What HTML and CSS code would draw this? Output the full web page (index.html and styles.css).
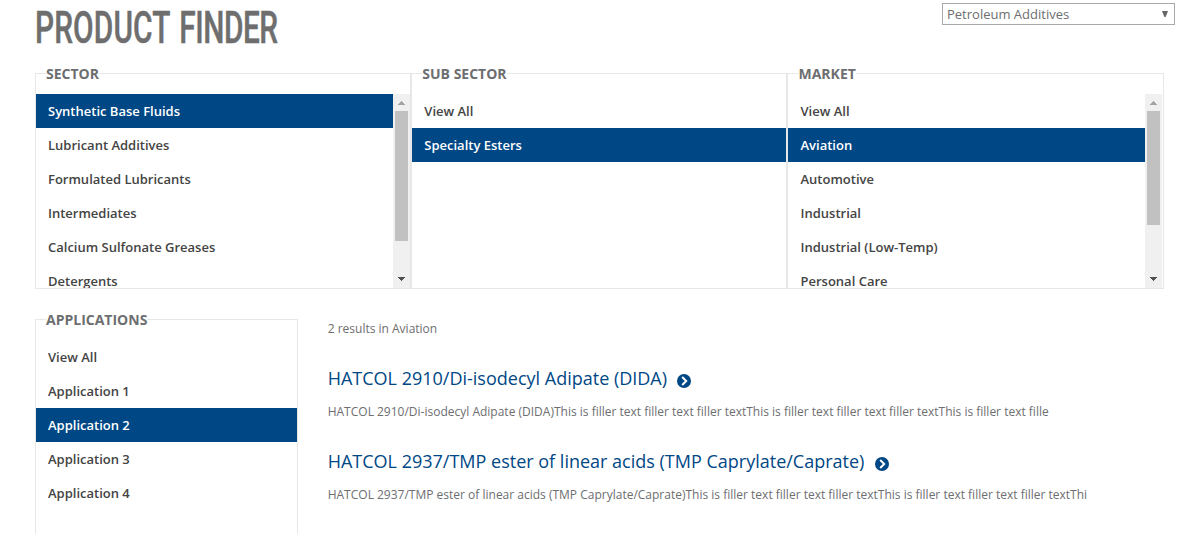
FILE: index.html
```html
<!DOCTYPE html>
<html lang="en">
<head>
<meta charset="utf-8">
<title>Product Finder</title>
<link rel="stylesheet" href="styles.css">
</head>
<body>
<header class="header">
  <h1 class="title"><span class="word-product">PRODUCT</span> <span class="word-finder">FINDER</span></h1>
  <div class="select" role="combobox" aria-label="Category" tabindex="0">
    <span>Petroleum Additives</span>
    <svg class="select-arrow" viewBox="0 0 6 6"><path d="M0 0h6L3.6 6H2.4z"/></svg>
  </div>
</header>
<main>
  <div class="panels">
    <section class="panel">
      <h2 class="legend">SECTOR</h2>
      <div class="body">
        <ul class="list">
          <li class="item selected">Synthetic Base Fluids</li>
          <li class="item">Lubricant Additives</li>
          <li class="item">Formulated Lubricants</li>
          <li class="item">Intermediates</li>
          <li class="item">Calcium Sulfonate Greases</li>
          <li class="item">Detergents</li>
        </ul>
        <div class="scrollbar">
          <svg class="arrow up" viewBox="0 0 17 17"><path d="M5 11h7v-1h-1v-1h-1v-1h-1v-1h-1v1h-1v1h-1v1h-1z"/></svg>
          <div class="thumb long"></div>
          <svg class="arrow down" viewBox="0 0 17 17"><path d="M5 6h7v1h-1v1h-1v1h-1v1h-1v-1h-1v-1h-1v-1h-1z"/></svg>
        </div>
      </div>
    </section>
    <section class="panel middle">
      <h2 class="legend">SUB SECTOR</h2>
      <div class="body">
        <ul class="list">
          <li class="item">View All</li>
          <li class="item selected">Specialty Esters</li>
        </ul>
      </div>
    </section>
    <section class="panel last">
      <h2 class="legend">MARKET</h2>
      <div class="body">
        <ul class="list">
          <li class="item">View All</li>
          <li class="item selected">Aviation</li>
          <li class="item">Automotive</li>
          <li class="item">Industrial</li>
          <li class="item">Industrial (Low-Temp)</li>
          <li class="item">Personal Care</li>
        </ul>
        <div class="scrollbar">
          <svg class="arrow up" viewBox="0 0 17 17"><path d="M5 11h7v-1h-1v-1h-1v-1h-1v-1h-1v1h-1v1h-1v1h-1z"/></svg>
          <div class="thumb short"></div>
          <svg class="arrow down" viewBox="0 0 17 17"><path d="M5 6h7v1h-1v1h-1v1h-1v1h-1v-1h-1v-1h-1v-1h-1z"/></svg>
        </div>
      </div>
    </section>
  </div>
  <div class="lower">
    <section class="panel applications">
      <h2 class="legend">APPLICATIONS</h2>
      <div class="body">
        <ul class="list">
          <li class="item">View All</li>
          <li class="item">Application 1</li>
          <li class="item selected">Application 2</li>
          <li class="item">Application 3</li>
          <li class="item">Application 4</li>
        </ul>
      </div>
    </section>
    <section class="results">
      <p class="count">2 results in Aviation</p>
      <article class="result">
        <h3 class="name"><span>HATCOL 2910/Di-isodecyl Adipate (DIDA)</span><svg class="go" viewBox="0 0 14 14"><circle cx="7" cy="7" r="7"/><path d="M5.2 3 9.2 7l-4 4"/></svg></h3>
        <p class="text">HATCOL 2910/Di-isodecyl Adipate (DIDA)This is filler text filler text filler textThis is filler text filler text filler textThis is filler text fille</p>
      </article>
      <article class="result">
        <h3 class="name"><span>HATCOL 2937/TMP ester of linear acids (TMP Caprylate/Caprate)</span><svg class="go" viewBox="0 0 14 14"><circle cx="7" cy="7" r="7"/><path d="M5.2 3 9.2 7l-4 4"/></svg></h3>
        <p class="text">HATCOL 2937/TMP ester of linear acids (TMP Caprylate/Caprate)This is filler text filler text filler textThis is filler text filler text filler textThi</p>
      </article>
    </section>
  </div>
</main>
</body>
</html>
```
FILE: styles.css
```css
* { box-sizing: border-box; }
body {
  margin: 0;
  height: 534px;
  overflow: hidden;
  background: #fff;
  color: #6d6e70;
  font-family: "Open Sans", "Noto Sans", sans-serif;
}
h1, h2, h3, p, ul { margin: 0; padding: 0; font-weight: 400; }
ul { list-style: none; }
svg { display: block; }

.header {
  display: flex;
  justify-content: space-between;
  align-items: flex-start;
  height: 73px;
  padding: 3px 25px 0 35px;
}
.title {
  font: 500 45px/50px Roboto, sans-serif;
  color: #6e6e6e;
  -webkit-text-stroke: .5px #6e6e6e;
  word-spacing: 2px;
  white-space: nowrap;
  transform: scaleX(.663);
  transform-origin: 0 0;
}
.word-product { letter-spacing: .2px; }
.word-finder { letter-spacing: -.7px; }
.select {
  display: flex;
  justify-content: space-between;
  align-items: center;
  width: 233px;
  height: 22px;
  padding: 0 6px 0 4px;
  border: 1px solid #a9a9a9;
  font-size: 13px;
  line-height: 20px;
}
.select-arrow { width: 6px; height: 6px; fill: #666; }

.panels { display: flex; width: 1129px; margin-left: 35px; }
.panel {
  display: flex;
  flex-direction: column;
  align-items: flex-start;
  width: 376px;
  height: 216px;
  border: 1px solid #e7e7e7;
}
.panel.last { width: 377px; }
.last .body { padding-right: 1px; }
.legend {
  margin: -10px 0 10px 10px;
  background: #fff;
  font-size: 14px;
  font-weight: 700;
  line-height: 20px;
}
.body { display: flex; align-self: stretch; flex: 1; min-height: 0; overflow: hidden; }
.list { flex: 1; }
.item {
  height: 34px;
  padding-left: 12px;
  color: #444;
  font-size: 13px;
  font-weight: 600;
  line-height: 34px;
}
.item.selected { background: #004785; color: #fff; }
.middle .legend { margin-left: 10.3px; }
.middle .item { padding-left: 12.3px; }
.last .legend { margin-left: 10.5px; }
.last .item { padding-left: 12.5px; }

.scrollbar { display: flex; flex-direction: column; width: 17px; height: 194px; background: #f0f0f0; }
.arrow { width: 17px; height: 17px; }
.up { fill: #a3a3a3; }
.down { margin-top: auto; fill: #505050; }
.thumb { width: 13px; margin-left: 2px; background: #c1c1c1; }
.long { height: 130px; }
.short { height: 114px; }

.lower { display: flex; height: 245px; padding: 30px 0 0 35px; overflow: hidden; }
.applications { width: 263px; height: 260px; }
.results { padding-left: 29.7px; white-space: nowrap; }
.count { font-size: 12px; line-height: 20px; margin-bottom: 26px; }
.result { height: 83px; }
.name {
  display: flex;
  align-items: center;
  color: #004785;
  font-size: 18px;
  line-height: 26px;
  margin-bottom: 11px;
}
.go { width: 14px; height: 14px; margin: 5px 0 0 10.3px; fill: #004785; }
.go path { fill: none; stroke: #fff; stroke-width: 2; }
.text { font-size: 12px; line-height: 20px; }
```
